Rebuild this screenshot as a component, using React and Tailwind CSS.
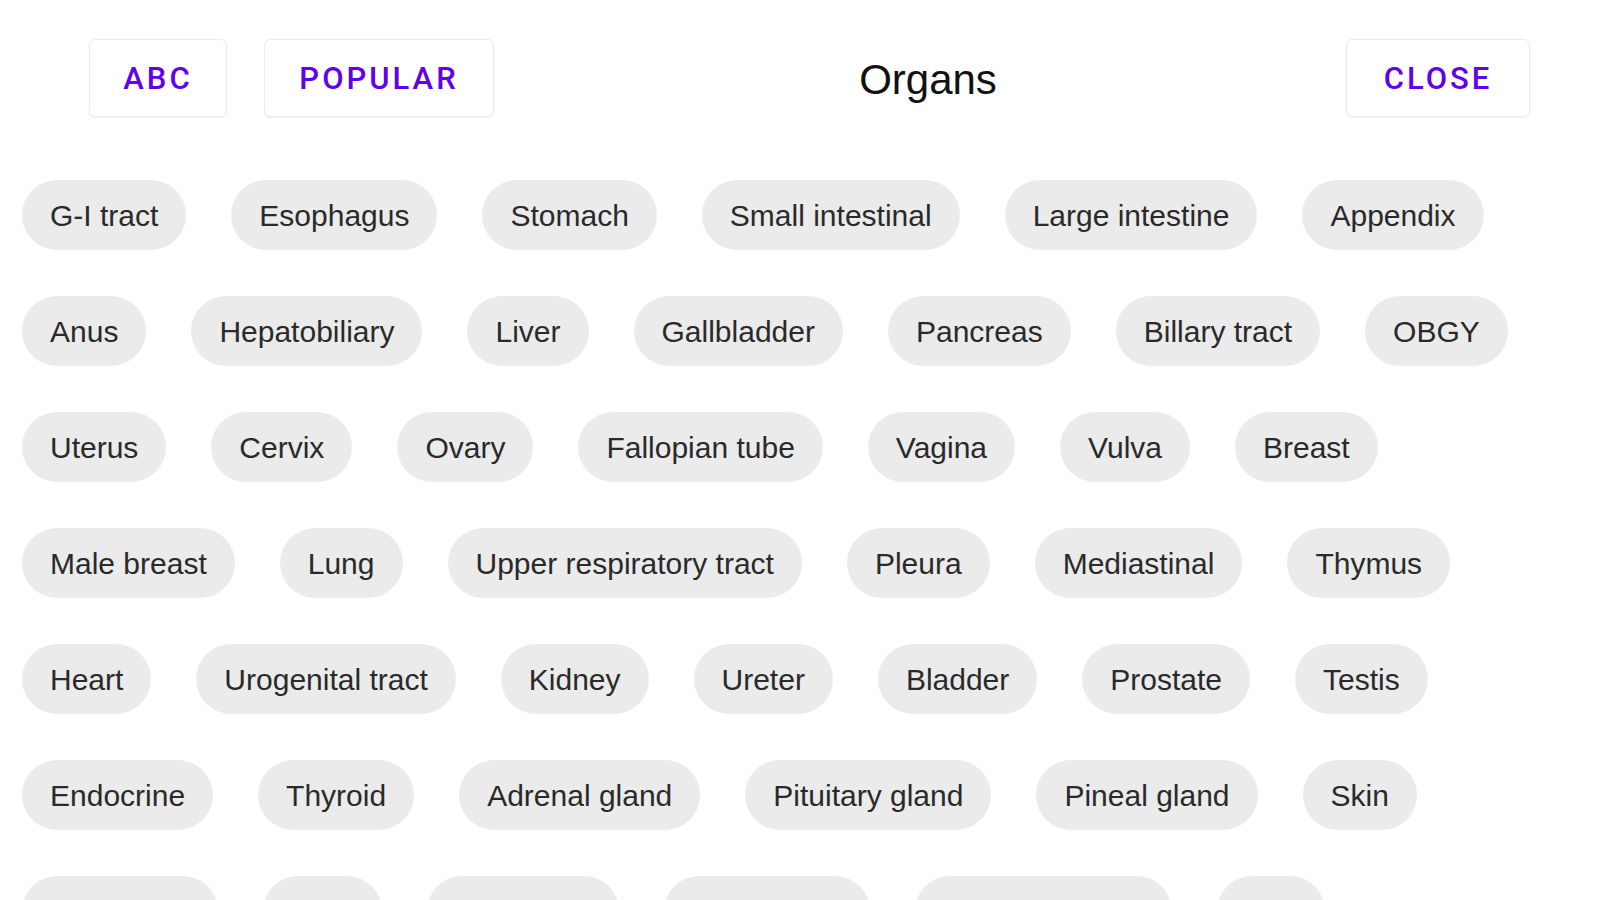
import React from 'react';

const rows = [
    'G-I tract', 'Esophagus', 'Stomach', 'Small intestinal', 'Large intestine', 'Appendix',
    'Anus', 'Hepatobiliary', 'Liver', 'Gallbladder', 'Pancreas', 'Billary tract', 'OBGY',
    'Uterus', 'Cervix', 'Ovary', 'Fallopian tube', 'Vagina', 'Vulva', 'Breast',
    'Male breast', 'Lung', 'Upper respiratory tract', 'Pleura', 'Mediastinal', 'Thymus',
    'Heart', 'Urogenital tract', 'Kidney', 'Ureter', 'Bladder', 'Prostate', 'Testis',
    'Endocrine', 'Thyroid', 'Adrenal gland', 'Pituitary gland', 'Pineal gland', 'Skin',
    'Soft tissue', 'CNS', 'Peritoneal', 'Spinal cord', 'Head and neck', 'Eye',
];

function HeaderButton({ label, width }) {
    return (
        <button
            className={`h-[78px] ${width} shrink-0 pt-[3px] bg-white border border-[#ececec] rounded-[6px] shadow-[0_1px_2px_rgba(0,0,0,0.06)] text-[#6200ee] text-[31px] font-medium tracking-[3px] flex items-center justify-center`}
            style={{ fontFamily: 'Roboto, "Liberation Sans", sans-serif' }}
        >
            {label}
        </button>
    );
}

export default function App() {
    return (
        <div className="w-full h-[900px] overflow-hidden bg-white" style={{ fontFamily: '"Liberation Sans", Arial, sans-serif' }}>

            {/* Top bar */}
            <div className="flex items-center pt-[39px] pl-[89px] pr-[70px]">
                <HeaderButton label="ABC" width="w-[138px]" />
                <div className="ml-[37px]">
                    <HeaderButton label="POPULAR" width="w-[230px]" />
                </div>
                <div className="flex-1 text-center pl-4 pt-[3px] text-[42px] text-[#111111] leading-none">
                    Organs
                </div>
                <HeaderButton label="CLOSE" width="w-[184px]" />
            </div>

            {/* Organ chips */}
            <div className="mt-[63px] pl-[22px] pr-[22px] flex flex-wrap gap-x-[45px] gap-y-[46px]">
                {rows.map((name) => (
                    <div
                        key={name}
                        className="h-[70px] px-[28px] rounded-full bg-[#ebebeb] text-[#2a2a2a] text-[30px] flex items-center whitespace-nowrap"
                    >
                        {name}
                    </div>
                ))}
            </div>
        </div>
    );
}
